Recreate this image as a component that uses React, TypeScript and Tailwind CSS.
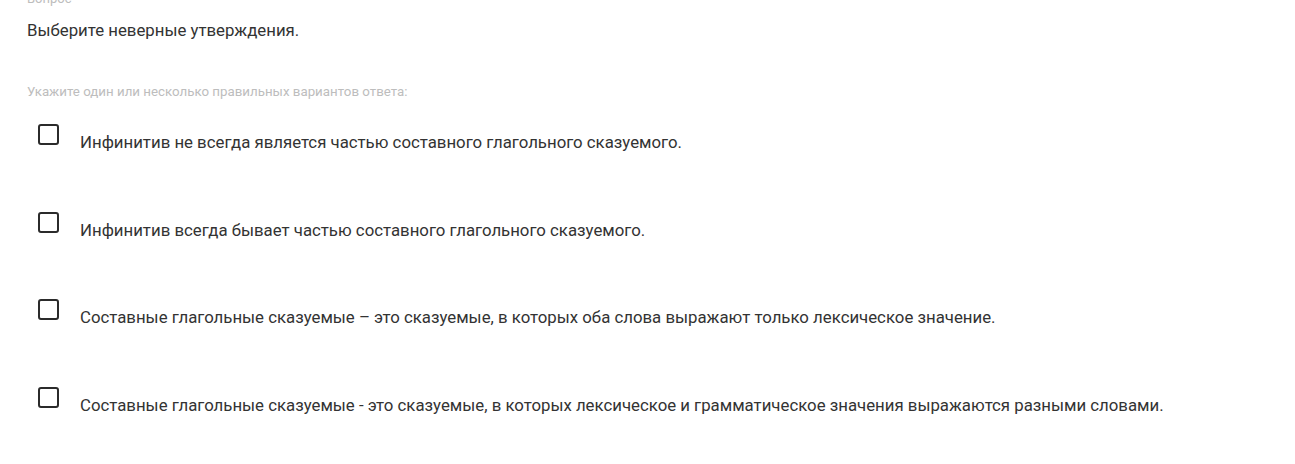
import React from 'react';

const options = [
  'Инфинитив не всегда является частью составного глагольного сказуемого.',
  'Инфинитив всегда бывает частью составного глагольного сказуемого.',
  'Составные глагольные сказуемые – это сказуемые, в которых оба слова выражают только лексическое значение.',
  'Составные глагольные сказуемые - это сказуемые, в которых лексическое и грамматическое значения выражаются разными словами.',
];

const App = () => {
  return (
    <div className="w-[1295px] h-[464px] overflow-hidden bg-white font-['Roboto',sans-serif] text-[#333]">
      <div className="pl-[27px] -mt-[9px]">
        <div className="text-[13px] leading-[16px] text-[#bdbdbd]">Вопрос</div>
        <div className="mt-[11px] text-[16.8px] leading-[24px] text-[#333]">Выберите неверные утверждения.</div>
        <div className="mt-[42px] text-[13.3px] leading-[16px] text-[#bdbdbd]">
          Укажите один или несколько правильных вариантов ответа:
        </div>
        <div className="mt-[24px] flex flex-col pl-[11px]">
          {options.map((text) => (
            <label key={text} className="flex h-[87.5px] items-start gap-[21px]">
              <span className="block h-[21px] w-[21px] shrink-0 rounded-[3px] border-2 border-[#2b2b2b]" />
              <span className="mt-[7px] text-[16.8px] leading-[22px] text-[#333]">{text}</span>
            </label>
          ))}
        </div>
      </div>
    </div>
  );
};

export default App;
